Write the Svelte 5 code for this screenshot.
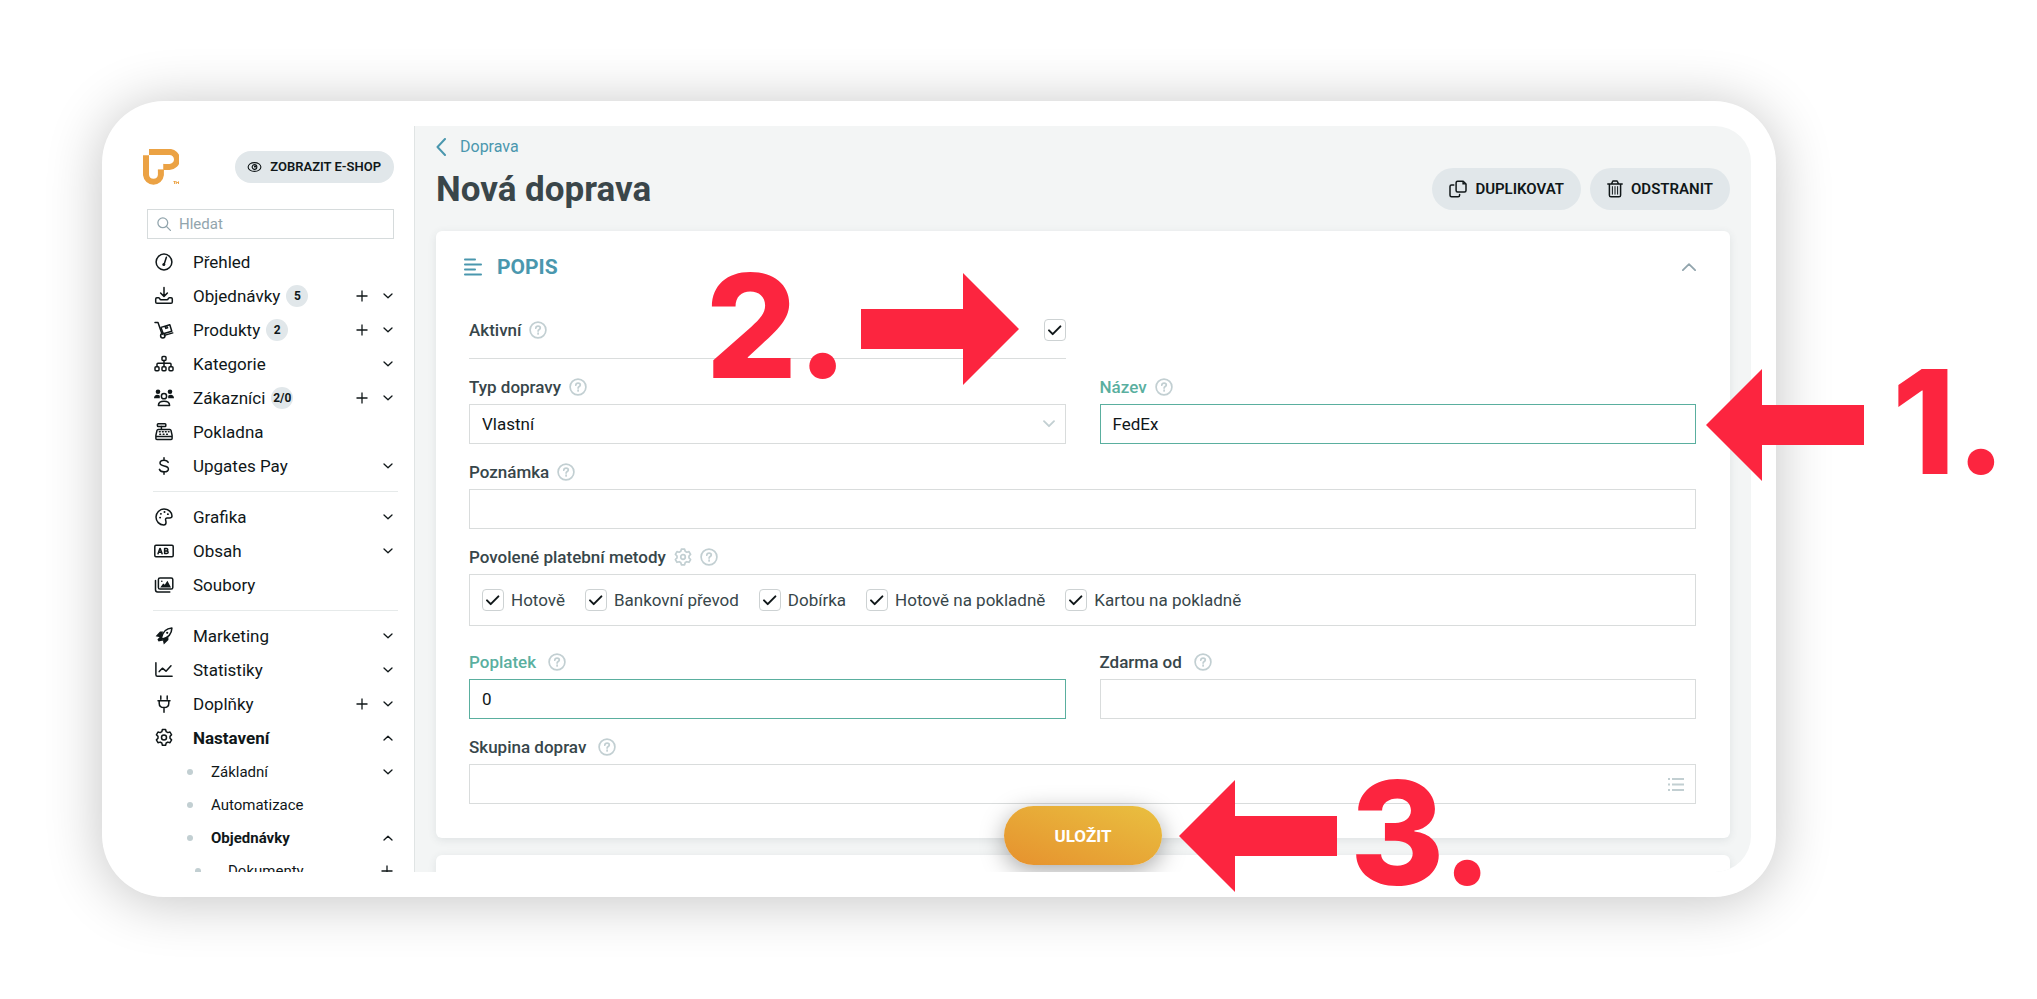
<script>
  const groups = [
    [
      { icon: 'gauge', label: 'Přehled' },
      { icon: 'inbox', label: 'Objednávky', badge: '5', plus: true, arrow: 'down' },
      { icon: 'trolley', label: 'Produkty', badge: '2', plus: true, arrow: 'down' },
      { icon: 'tree', label: 'Kategorie', arrow: 'down' },
      { icon: 'people', label: 'Zákazníci', badge: '2/0', plus: true, arrow: 'down' },
      { icon: 'register', label: 'Pokladna' },
      { icon: 'dollar', label: 'Upgates Pay', arrow: 'down' }
    ],
    [
      { icon: 'palette', label: 'Grafika', arrow: 'down' },
      { icon: 'ab', label: 'Obsah', arrow: 'down' },
      { icon: 'images', label: 'Soubory' }
    ],
    [
      { icon: 'rocket', label: 'Marketing', arrow: 'down' },
      { icon: 'chart', label: 'Statistiky', arrow: 'down' },
      { icon: 'plug', label: 'Doplňky', plus: true, arrow: 'down' },
      {
        icon: 'gear', label: 'Nastavení', arrow: 'up', bold: true,
        children: [
          { label: 'Základní', arrow: 'down' },
          { label: 'Automatizace' },
          { label: 'Objednávky', arrow: 'up', bold: true },
          { label: 'Dokumenty', plus: true, deep: true }
        ]
      }
    ]
  ];

  let methods = $state([
    { label: 'Hotově', on: true },
    { label: 'Bankovní převod', on: true },
    { label: 'Dobírka', on: true },
    { label: 'Hotově na pokladně', on: true },
    { label: 'Kartou na pokladně', on: true }
  ]);
  let active = $state(true);
  let name = $state('FedEx');
  let fee = $state('0');

  const gearPath = 'M8.4 1.5h3.2l.6 2.2 1.6.9 2.2-.6 1.6 2.8-1.6 1.6v1.9l1.6 1.6-1.6 2.8-2.2-.6-1.6.9-.6 2.2H8.4l-.6-2.2-1.6-.9-2.2.6-1.6-2.8L4 10.3V8.4L2.4 6.8 4 4l2.2.6 1.6-.9z';
</script>

{#snippet icon(kind)}
  <svg class="icon" viewBox="0 0 20 20" aria-hidden="true">
    {#if kind === 'gauge'}
      <circle cx="10" cy="10" r="7.9" /><path d="M12.4 5.2 10.2 12" /><circle class="solid" cx="9.8" cy="12.6" r="1.5" />
    {:else if kind === 'inbox'}
      <path d="M10 1.6v8.6M6.6 7l3.4 3.4L13.4 7" /><path d="M4.6 11.8H2.9c-.8 0-1.2.5-1.2 1.2v2.9c0 .8.5 1.3 1.3 1.3h14c.8 0 1.3-.5 1.3-1.3V13c0-.8-.5-1.2-1.2-1.2h-1.7c-.8 0-1 .4-1.2 1-.2.7-.5 1-1.2 1H7c-.7 0-1-.3-1.2-1-.2-.6-.4-1-1.2-1z" />
    {:else if kind === 'trolley'}
      <path d="M1 2.4h3l4.2 12M10.4 15.4l8.400-2.500" /><circle cx="8.8" cy="15.8" r="2.2" /><path d="m7 7.4 8.8-2.6 2 6.4-8.6 2.6zM11.2 6.2l.6 2.200 1.800-.5-.6-2.200" />
    {:else if kind === 'tree'}
      <rect x="8" y="2.400" width="4" height="4" rx="1" /><path d="M10 6.400v6M3 12.600V10.200c0-.6.3-.9.9-.9h12.200c.6 0 .9.3.9.9v2.400" /><rect x="1" y="12.800" width="4" height="4" rx="1" /><rect x="8" y="12.800" width="4" height="4" rx="1" /><rect x="15" y="12.800" width="4" height="4" rx="1" />
    {:else if kind === 'people'}
      <circle class="solid" cx="4" cy="3.800" r="2.300" /><circle class="solid" cx="16" cy="3.800" r="2.300" /><path class="solid" d="M0 10.200c0-2.200 1.400-3.500 3.200-3.500 1.100 0 2 .4 2.600 1v2.500zM20 10.200c0-2.200-1.400-3.500-3.200-3.500-1.100 0-2 .4-2.600 1v2.500z" /><circle cx="10" cy="8.200" r="2.600" /><path d="M4.400 17.400c0-2.600 2-4.100 5.600-4.100s5.600 1.500 5.600 4.100z" />
    {:else if kind === 'register'}
      <rect x="3.400" y="1.800" width="8.400" height="2.800" rx=".8" /><path d="M7.400 4.600v2.600M4.200 7.400h11.600c.8 0 1 .3 1.200 1l1.100 5v3.100c0 .6-.4 1-1 1H2.900c-.6 0-1-.4-1-1v-3.100l1.100-5c.2-.7.4-1 1.200-1zM2 14.600h16" /><path d="M5.400 9.800h.8M8.400 9.800h.8M11.400 9.800h.8M14.400 9.800h.6M5.800 12.200h.8M9.200 12.200h.8M12.600 12.200h.8" />
    {:else if kind === 'dollar'}
      <path d="M10 1.800v2.400M10 15.800v2.400M14.200 6.400C13.600 5 12.200 4.200 10 4.200c-2.400 0-4 1.100-4 2.900 0 4.200 8.400 1.600 8.400 5.800 0 1.800-1.800 2.900-4.400 2.900-2.400 0-4-.9-4.600-2.400" />
    {:else if kind === 'palette'}
      <path d="M10 2.100c4.600 0 8 3 8 6.900 0 1.400-1 2-2.600 2h-2.300c-1.200 0-1.800.9-1.500 2 .3 1.200.4 1.700.4 2.400 0 1.400-.8 2.500-2.300 2.500C5.300 17.900 2 14.400 2 10.100 2 5.600 5.600 2.100 10 2.100z" /><path d="M6 10.600h.2M6.800 6.800h.2M10.400 5h.2M13.800 7.200h.2" class="dots" />
    {:else if kind === 'ab'}
      <rect x=".8" y="4.200" width="18.400" height="11.600" rx="1.200" /><path d="m4 12.800 1.900-5.400h.3l1.900 5.400M4.800 11.200h2.600M10.600 7.500v5.100h2c2.100 0 2-2.600.2-2.600h-2.200 1.900c1.800 0 1.700-2.500-.2-2.500z" />
    {:else if kind === 'images'}
      <rect x="4.400" y="3" width="14.400" height="11" rx="1.600" /><path d="M1.500 5.400v9.400c0 1.300.8 2.100 2.100 2.100h12.200" /><path class="solid" d="m6.200 12.400 3-4 1.600 1.400 2.600-4 3.600 6.600z" /><circle class="solid" cx="7.800" cy="6.200" r=".8" />
    {:else if kind === 'rocket'}
      <path d="M7.400 11.800C8.600 6.400 12 2.600 17.900 2.100c-.3 5.900-4.100 9.600-9.400 10.900z" /><circle class="solid" cx="13.200" cy="6.800" r="1.100" /><path class="solid" d="M9 5.600H6L1.600 10.200l4.600 1 1.400.2zM14.400 11v3L9.800 18.600l-1-4.600-.4-1.600zM6 10.600l-2.600 3 1.200 2 4.600-1-.4-2.600z" />
    {:else if kind === 'chart'}
      <path d="M1.900 2.700v12c0 1 .5 1.500 1.500 1.500h14.700" /><path d="m5.200 11.600 3.200-3.400 3.600 3 5-5.400" />
    {:else if kind === 'plug'}
      <path d="M6.800 2v3.200M13.200 2v3.200M4 6.800h12M5.200 6.800v2.400c0 2.600 1.800 4.400 4.800 4.400s4.800-1.800 4.800-4.400V6.800M10 13.600v4.600" />
    {:else if kind === 'gear'}
      <path d={gearPath} /><circle cx="10" cy="9.400" r="2.500" />
    {/if}
  </svg>
{/snippet}

{#snippet caret(dir)}
  <svg class="caret" viewBox="0 0 10 6" aria-hidden="true">
    <path d={dir === 'up' ? 'M1 5l4-3.800L9 5' : 'M1 1l4 3.800L9 1'} />
  </svg>
{/snippet}

{#snippet plusSign()}
  <svg class="plus" viewBox="0 0 12 12" aria-hidden="true"><path d="M6 .5v11M.5 6h11" /></svg>
{/snippet}

{#snippet help()}
  <svg class="help" viewBox="0 0 18 18" aria-hidden="true">
    <circle cx="9" cy="9" r="7.900" />
    <path d="M6.800 7.200c.1-1.300 1-2 2.300-2s2.200.7 2.200 1.800c0 1.500-2.200 1.500-2.200 3.100" />
    <path d="M9.100 12.100v.8" />
  </svg>
{/snippet}

{#snippet tick()}
  <svg viewBox="0 0 22 22" aria-hidden="true"><path d="M5 11.400l3.700 3.700 7.700-7.700" /></svg>
{/snippet}

{#snippet pointer(dir)}
  <svg class="pointer" viewBox="0 0 158 112" aria-hidden="true">
    <path d={dir === 'left' ? 'M0 56 56 0v36h102v40H56v36z' : 'M158 56 102 0v36H0v40h102v36z'} />
  </svg>
{/snippet}

<div class="page">
  <div class="frame">
    <div class="screen">
      <aside>
        <div class="brand">
          <svg class="logo" viewBox="0 0 36 37" role="img" aria-label="Upgates">
            <path d="M6 2.900h20.500a7.500 7.500 0 0 1 0 15H20.800" />
            <path d="M3 6.300v19.700a7.500 7.500 0 0 0 14.900 0V21" />
            <path d="M14.900 20.900h5.900v-6" class="hair" />
            <path d="M30.500 32.500h2.200M31.600 32.500v2.500M33.300 35v-2.400l1.100 1.400 1.100-1.400V35" class="hair" />
          </svg>
          <a class="pill small" href="#shop">
            <svg viewBox="0 0 16 12" aria-hidden="true"><ellipse cx="8" cy="6" rx="6.800" ry="4.700" /><circle cx="8" cy="6" r="2.500" /><circle cx="8.500" cy="5.500" r=".6" /></svg>
            ZOBRAZIT E-SHOP
          </a>
        </div>
        <label class="search">
          <svg viewBox="0 0 14 14" aria-hidden="true"><circle cx="5.800" cy="5.800" r="4.900" /><path d="m9.400 9.400 4 4" /></svg>
          <input type="search" placeholder="Hledat" aria-label="Hledat" />
        </label>
        <nav>
          {#each groups as group}
            <ul>
              {#each group as item}
                <li>
                  <a href="#menu" class="item" class:bold={item.bold}>
                    {@render icon(item.icon)}
                    <span class="label">{item.label}</span>
                    {#if item.badge}<span class="badge">{item.badge}</span>{/if}
                    <span class="tools">
                      {#if item.plus}{@render plusSign()}{/if}
                      {#if item.arrow}{@render caret(item.arrow)}{:else}<span class="blank"></span>{/if}
                    </span>
                  </a>
                  {#if item.children}
                    <ul class="sub">
                      {#each item.children as child}
                        <li>
                          <a href="#menu" class="item" class:bold={child.bold} class:deep={child.deep}>
                            <span class="bullet"></span>
                            <span class="label">{child.label}</span>
                            <span class="tools">
                              {#if child.plus}{@render plusSign()}{/if}
                              {#if child.arrow}{@render caret(child.arrow)}{/if}
                            </span>
                          </a>
                        </li>
                      {/each}
                    </ul>
                  {/if}
                </li>
              {/each}
            </ul>
          {/each}
        </nav>
      </aside>

      <main>
        <a class="back" href="#doprava">
          <svg viewBox="0 0 10 18" aria-hidden="true"><path d="M9 1 1.500 9 9 17" /></svg>
          Doprava
        </a>
        <header>
          <h1>Nová doprava</h1>
          <button class="pill" type="button">
            <svg viewBox="0 0 18 18" aria-hidden="true"><path d="M8.600 1.200h5.600l2.800 2.800v6.400c0 1-.5 1.500-1.500 1.500H8.600c-1 0-1.500-.5-1.500-1.500V2.700c0-1 .5-1.500 1.500-1.500z" /><path class="solid" d="M13.400 1.200V4.600h3.600z" /><path d="M4.800 5H2.500C1.500 5 1 5.500 1 6.500v8.800c0 1 .5 1.500 1.500 1.500h6.600c1 0 1.500-.5 1.500-1.500v-.7" /></svg>
            DUPLIKOVAT
          </button>
          <button class="pill" type="button">
            <svg class="bin" viewBox="0 0 16 18" aria-hidden="true"><path d="M.8 4h14.400M4.600 3.800l1-2.300c.1-.3.3-.4.6-.4h3.600c.3 0 .5.100.6.400l1 2.300M2.400 4v11.200c0 1 .6 1.600 1.600 1.600h8c1 0 1.600-.6 1.600-1.600V4" /><path d="M5.400 6.600v7.600M8 6.600v7.600M10.600 6.600v7.600" class="hair" /></svg>
            ODSTRANIT
          </button>
        </header>

        <section class="card">
          <div class="cardhead">
            <svg class="lines" viewBox="0 0 18 18" aria-hidden="true"><path d="M.9 1.500h10.200M.9 6.500h16.200M.9 11.500h10.200M.9 16.500h16.200" /></svg>
            <h2>POPIS</h2>
            <button type="button" class="collapse" aria-label="Sbalit">
              <svg viewBox="0 0 14 8" aria-hidden="true"><path d="M.9 7.200 7 1.200l6.100 6" /></svg>
            </button>
          </div>

          <form>
            <div class="cell switch">
              <label for="active">Aktivní</label>{@render help()}
              <span class="check"><input id="active" type="checkbox" bind:checked={active} />{@render tick()}</span>
            </div>
            <div class="cell start">
              <div class="caption"><label for="kind">Typ dopravy</label>{@render help()}</div>
              <div class="box">
                <select id="kind"><option>Vlastní</option></select>
                <svg class="open" viewBox="0 0 12 8" aria-hidden="true"><path d="M1 1.200l5 5 5-5" /></svg>
              </div>
            </div>
            <div class="cell changed">
              <div class="caption"><label for="name">Název</label>{@render help()}</div>
              <div class="box"><input id="name" type="text" bind:value={name} /></div>
            </div>
            <div class="cell wide">
              <div class="caption"><label for="note">Poznámka</label>{@render help()}</div>
              <div class="box"><input id="note" type="text" /></div>
            </div>
            <div class="cell wide" role="group" aria-labelledby="methods">
              <div class="caption">
                <span class="title" id="methods">Povolené platební metody</span>
                <svg class="help cog" viewBox="1 .4 18 18" aria-hidden="true"><path d={gearPath} /><circle cx="10" cy="9.400" r="2.300" /></svg>
                {@render help()}
              </div>
              <div class="methods">
                {#each methods as method}
                  <label class="method">
                    <span class="check"><input type="checkbox" bind:checked={method.on} />{@render tick()}</span>
                    {method.label}
                  </label>
                {/each}
              </div>
            </div>
            <div class="cell changed spaced loose">
              <div class="caption"><label for="fee">Poplatek</label>{@render help()}</div>
              <div class="box"><input id="fee" type="text" bind:value={fee} /></div>
            </div>
            <div class="cell spaced loose">
              <div class="caption"><label for="free">Zdarma od</label>{@render help()}</div>
              <div class="box"><input id="free" type="text" /></div>
            </div>
            <div class="cell wide loose">
              <div class="caption"><label for="group">Skupina doprav</label>{@render help()}</div>
              <div class="box">
                <input id="group" type="text" />
                <svg class="list" viewBox="0 0 16 13" aria-hidden="true"><path d="M0 1h2M4 1h12M0 6.500h2M4 6.500h12M0 12h2M4 12h12" /></svg>
              </div>
            </div>
          </form>
        </section>
        <section class="card next"></section>
        <button class="save" type="button">ULOŽIT</button>
      </main>
    </div>

    <div class="callouts">
      <div class="callout first">{@render pointer('left')}<strong>1.</strong></div>
      <div class="callout second"><strong>2.</strong>{@render pointer('right')}</div>
      <div class="callout third">{@render pointer('left')}<strong>3.</strong></div>
    </div>
  </div>
</div>

<style>
  :global(body) { background: #fff; }
  .page, .page * { box-sizing: border-box; }
  .page {
    display: flex;
    height: 100vh;
    min-height: 600px;
    padding: 101px 261px 102px 102px;
    overflow: hidden;
    font-family: Roboto, "Liberation Sans", sans-serif;
    font-size: 17px;
    line-height: 20px;
    color: #101719;
  }
  .frame {
    position: relative;
    display: flex;
    flex: 1;
    min-width: 0;
    padding: 25px;
    border-radius: 62px;
    background: #fff;
    box-shadow: 0 4px 56px rgba(0, 0, 0, 0.24);
  }
  .screen {
    display: grid;
    grid-template-columns: 288px minmax(0, 1fr);
    grid-template-rows: minmax(0, 1fr);
    flex: 1;
    min-width: 0;
    overflow: hidden;
    border-radius: 36px;
  }
  svg { display: block; flex: none; fill: none; stroke: currentColor; stroke-linecap: round; stroke-linejoin: round; }
  a { color: inherit; text-decoration: none; }
  ul { margin: 0; padding: 0; list-style: none; }
  button, input, select { font: inherit; color: inherit; }
  .solid { fill: currentColor; stroke: none; }

  aside { padding: 20px 20px 0 16px; border-right: 1px solid #e0e4e4; background: #fff; overflow: hidden; }
  .brand { display: flex; align-items: center; justify-content: space-between; height: 41px; }
  .logo { width: 36px; height: 37px; margin-top: 2px; color: #eba244; stroke-width: 6; stroke-linecap: butt; stroke-linejoin: miter; }
  .logo .hair { stroke-width: 1; }
  .pill {
    display: flex;
    align-items: center;
    gap: 8px;
    height: 42px;
    padding: 0 17px;
    border: 0;
    border-radius: 21px;
    background: #e1e7ea;
    font-size: 15px;
    font-weight: 600;
  }
  .pill svg { width: 18px; height: 18px; stroke-width: 1.5; }
  .pill .bin { width: 16px; }
  .pill .hair { stroke-width: 1; }
  .pill.small { height: 32px; padding: 0 13px 0 12px; font-size: 13px; }
  .pill.small svg { width: 15px; height: 12px; stroke-width: 1.2; }
  .search {
    display: flex;
    align-items: center;
    gap: 8px;
    height: 30px;
    margin: 22px 0 6px 4px;
    padding: 0 9px;
    border: 1px solid #d6dbdc;
    color: #92a5ad;
  }
  .search svg { width: 14px; height: 14px; stroke-width: 1.3; }
  .search input { flex: 1; min-width: 0; padding: 0; border: 0; outline: 0; background: none; font-size: 15px; }
  .search input::placeholder { color: #92a5ad; opacity: 1; }

  nav > ul + ul { margin-top: 8px; padding-top: 8px; border-top: 1px solid #e6eaea; }
  nav > ul { margin: 0 -4px 0 10px; }
  .item { display: flex; align-items: center; height: 34px; padding-right: 5px; }
  .icon { width: 20px; height: 20px; margin: 0 19px 0 1px; stroke-width: 1.5; }
  .icon .dots { stroke-width: 1.8; }
  .badge {
    min-width: 22px;
    height: 22px;
    margin-left: 6px;
    border-radius: 11px;
    background: #e1e7ea;
    font-size: 12px;
    font-weight: 700;
    line-height: 22px;
    text-align: center;
  }
  .tools { display: flex; align-items: center; gap: 15px; margin-left: auto; }
  .caret { width: 10px; height: 6px; stroke-width: 1.3; }
  .plus { width: 12px; height: 12px; stroke-width: 1.3; stroke-linecap: butt; }
  .blank { width: 10px; }
  .bold { font-weight: 700; }
  .sub .item { height: 33px; padding-left: 34px; font-size: 15px; }
  .bullet { width: 6px; height: 6px; margin-right: 18px; border-radius: 50%; background: #c2cfd2; }
  .sub .deep { padding-left: 42px; }
  .deep .bullet { margin-right: 27px; }

  main {
    display: grid;
    position: relative;
    align-content: start;
    padding: 0 21px;
    overflow: hidden;
    background: #f3f5f5;
    color: #37464a;
  }
  .back { display: flex; align-items: center; gap: 14px; height: 42px; font-size: 16px; color: #4a97ae; justify-self: start; }
  .back svg { width: 10px; height: 18px; stroke-width: 2; }
  header { display: flex; align-items: center; gap: 9px; margin-bottom: 21px; }
  h1 { margin: 0 auto 0 0; padding-top: 2px; font-size: 35px; line-height: 40px; font-weight: 700; color: #3a464a; }
  header .pill { color: #101719; }

  .card { border-radius: 6px; background: #fff; box-shadow: 0 2px 8px rgba(50, 70, 80, 0.1); }
  .card + .card { margin-top: 17px; height: 200px; }
  .cardhead { display: flex; align-items: center; height: 72px; padding: 0 34px 0 28px; color: #4a97ae; }
  .lines { width: 18px; height: 18px; margin-right: 15px; stroke-width: 1.8; }
  h2 { margin: 0 auto 0 0; font-size: 21px; line-height: 24px; font-weight: 700; }
  .collapse { padding: 0; border: 0; background: none; color: #92a5ad; }
  .collapse svg { width: 14px; height: 8px; stroke-width: 1.8; }
  form { display: grid; grid-template-columns: 1fr 1fr; column-gap: 34px; padding: 0 34px 34px 33px; }
  .cell { margin-top: 11px; }
  .start { grid-column: 1; }
  .wide { grid-column: 1 / -1; }
  .spaced { margin-top: 19px; }
  .switch { display: flex; align-items: center; gap: 8px; height: 56px; margin: 0; padding-bottom: 2px; border-bottom: 1px solid #dadddd; }
  .switch .check { margin-left: auto; }
  .caption { display: flex; align-items: center; gap: 8px; height: 34px; }
  .loose .caption { gap: 12px; }
  .switch label, .caption label, .title { font-weight: 500; }
  .changed label { color: #5aaf9f; }
  .help { width: 18px; height: 18px; color: #c2cfd2; stroke-width: 1.7; }
  .box { display: flex; align-items: center; height: 40px; padding: 0 12px; border: 1px solid #d9dcdc; background: #fff; color: #101719; }
  .changed .box { border-color: #5aaf9f; }
  .box input, .box select { flex: 1; min-width: 0; height: 36px; padding: 0; border: 0; outline: 0; background: none; appearance: none; }
  .open { width: 12px; height: 8px; margin-right: -2px; color: #c2cfd2; stroke-width: 1.8; }
  .list { width: 16px; height: 13px; margin-right: -1px; color: #c2cfd2; stroke-width: 2; stroke-linecap: butt; }
  .methods { display: flex; flex-wrap: wrap; align-items: center; gap: 8px 20px; min-height: 52px; padding: 0 12px; border: 1px solid #d9dcdc; }
  .method { display: flex; align-items: center; gap: 7px; }
  .check { display: grid; width: 22px; height: 22px; color: #101719; }
  .check > :global(*) { grid-area: 1 / 1; }
  .check input { width: 22px; height: 22px; margin: 0; border: 1px solid #cdd2d3; border-radius: 4px; background: #fff; appearance: none; }
  .check svg { width: 22px; height: 22px; stroke-width: 2; pointer-events: none; }
  .check input:not(:checked) + svg { visibility: hidden; }

  .save {
    position: absolute;
    bottom: 7px;
    left: 50%;
    translate: -50%;
    width: 158px;
    height: 59px;
    border: 0;
    border-radius: 30px;
    background: linear-gradient(20deg, #e6912e, #e9c040);
    box-shadow: 0 6px 24px rgba(0, 0, 0, 0.35);
    color: #fff;
    font-size: 17px;
    font-weight: 700;
  }

  .callouts { position: absolute; inset: 0 25px 0 313px; pointer-events: none; color: #fc253f; }
  .callout { position: absolute; display: flex; align-items: center; gap: 13px; }
  .pointer { width: 158px; height: 112px; fill: currentColor; stroke: none; }
  .callout strong { padding-bottom: 6px; font-family: Inter, "Open Sans", sans-serif; font-size: 144px; line-height: 106px; font-weight: 800; white-space: nowrap; }
  .first { top: 268px; left: calc(100% - 45px); gap: 28px; }
  .second { top: 172px; right: calc(50% + 64px); }
  .third { bottom: 5px; left: calc(50% + 96px); }
</style>
